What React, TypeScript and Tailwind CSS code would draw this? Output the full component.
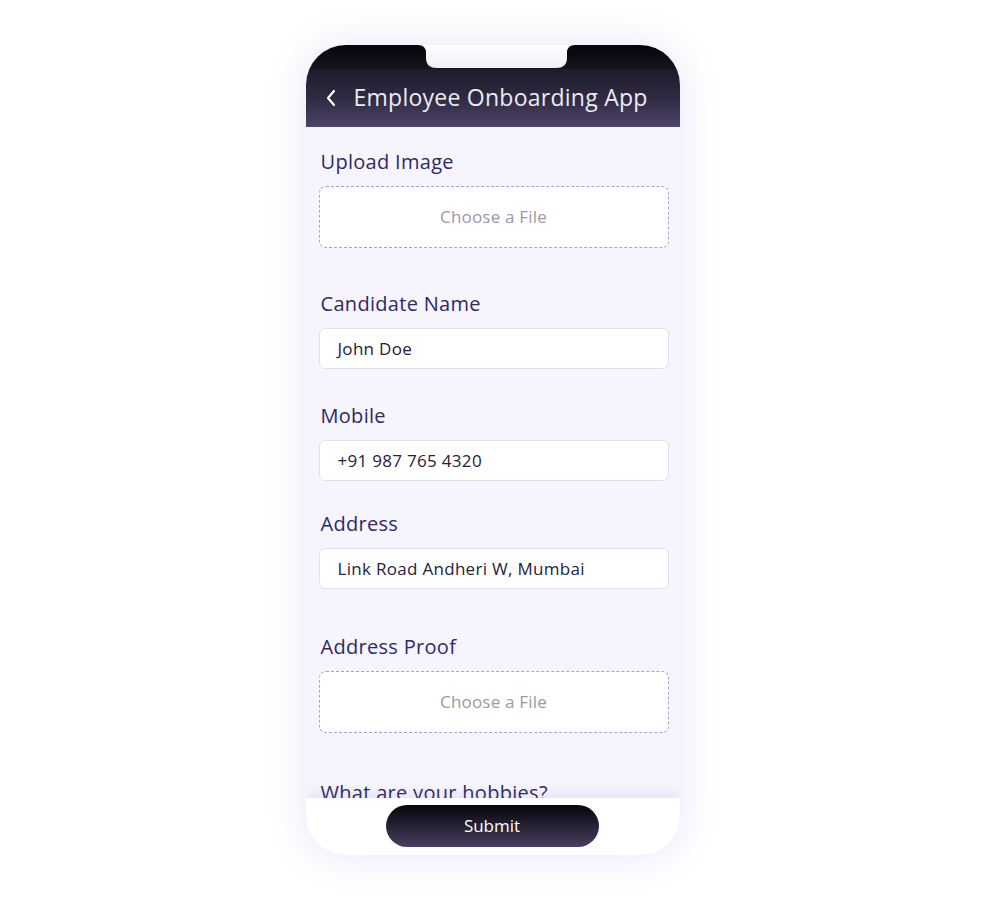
import React from "react";

const Label = ({ children, className = "" }: { children: React.ReactNode; className?: string }) => (
  <div className={`shrink-0 ml-[15px] text-[20px] leading-[24px] tracking-[0.3px] text-[#2e2a66] ${className}`}>{children}</div>
);

const TextField = ({ value, className = "" }: { value: string; className?: string }) => (
  <div
    className={`shrink-0 ml-[13px] w-[350px] h-[41px] rounded-[6px] border border-[#e2dff5] bg-white flex items-center pl-[18px] text-[17px] tracking-[0.3px] font-medium text-[#25223a] ${className}`}
  >
    {value}
  </div>
);

const FileField = ({ className = "" }: { className?: string }) => (
  <div
    className={`shrink-0 ml-[13px] w-[350px] h-[62px] rounded-[7px] border border-dashed border-[#a89fd6] bg-white flex items-center justify-center text-[17px] tracking-[0.2px] text-[#9b98a8] ${className}`}
  >
    Choose a File
  </div>
);

export default function App() {
  return (
    <div
      className="w-full h-[902px] bg-white flex justify-center pt-[45px]"
      style={{ fontFamily: '"Open Sans", "Noto Sans", sans-serif' }}
    >
      <div className="relative w-[374px] h-[810px] rounded-[40px] bg-[#f6f5fd] overflow-hidden shadow-[0_0_40px_rgba(110,95,210,0.16)] flex flex-col">
        {/* header */}
        <div className="relative shrink-0">
          <div className="h-[24px] bg-gradient-to-b from-[#07060b] to-[#15131d]" />
          <div className="h-[58px] bg-gradient-to-b from-[#1e1b2b] via-[#2f2a43] to-[#4e4468] flex items-center pl-[19px] pb-[1px]">
            <svg width="12" height="18" viewBox="0 0 12 18" className="mr-[17px] shrink-0">
              <path d="M9 2 L3 9 L9 16" fill="none" stroke="#ffffff" strokeWidth="2.2" strokeLinecap="round" strokeLinejoin="round" />
            </svg>
            <span className="text-[23px] text-[#ecebf2] tracking-[0.25px] whitespace-nowrap">Employee Onboarding App</span>
          </div>
          <svg
            className="absolute top-0 left-[112px]"
            width="157"
            height="24"
            viewBox="0 0 157 24"
          >
            <defs>
              <linearGradient id="ng" x1="0" y1="0" x2="0" y2="1">
                <stop offset="0" stopColor="#ffffff" />
                <stop offset="1" stopColor="#f1f0f9" />
              </linearGradient>
            </defs>
            <path d="M0 0 Q8 0 8 8 L8 13 Q8 23 19 23 L138 23 Q149 23 149 13 L149 8 Q149 0 157 0 Z" fill="url(#ng)" />
          </svg>
        </div>

        {/* body */}
        <div className="flex-1 min-h-0 flex flex-col overflow-hidden pt-[23px]">
          <Label>Upload Image</Label>
          <FileField className="mt-[12px]" />

          <Label className="mt-[44px]">Candidate Name</Label>
          <TextField value="John Doe" className="mt-[12px]" />

          <Label className="mt-[35px]">Mobile</Label>
          <TextField value="+91 987 765 4320" className="mt-[12px]" />

          <Label className="mt-[31px]">Address</Label>
          <TextField value="Link Road Andheri W, Mumbai" className="mt-[12px]" />

          <Label className="mt-[46px]">Address Proof</Label>
          <FileField className="mt-[12px]" />

          <Label className="mt-[48px]">What are your hobbies?</Label>
        </div>

        {/* footer */}
        <div className="relative shrink-0 h-[57px] bg-white flex justify-center pt-[7px] shadow-[0_-6px_10px_rgba(120,105,210,0.10)]">
          <button className="w-[213px] h-[42px] ml-[-1px] rounded-full bg-gradient-to-b from-[#08070c] to-[#4a4062] text-white text-[17px] font-medium">
            Submit
          </button>
        </div>
      </div>
    </div>
  );
}
